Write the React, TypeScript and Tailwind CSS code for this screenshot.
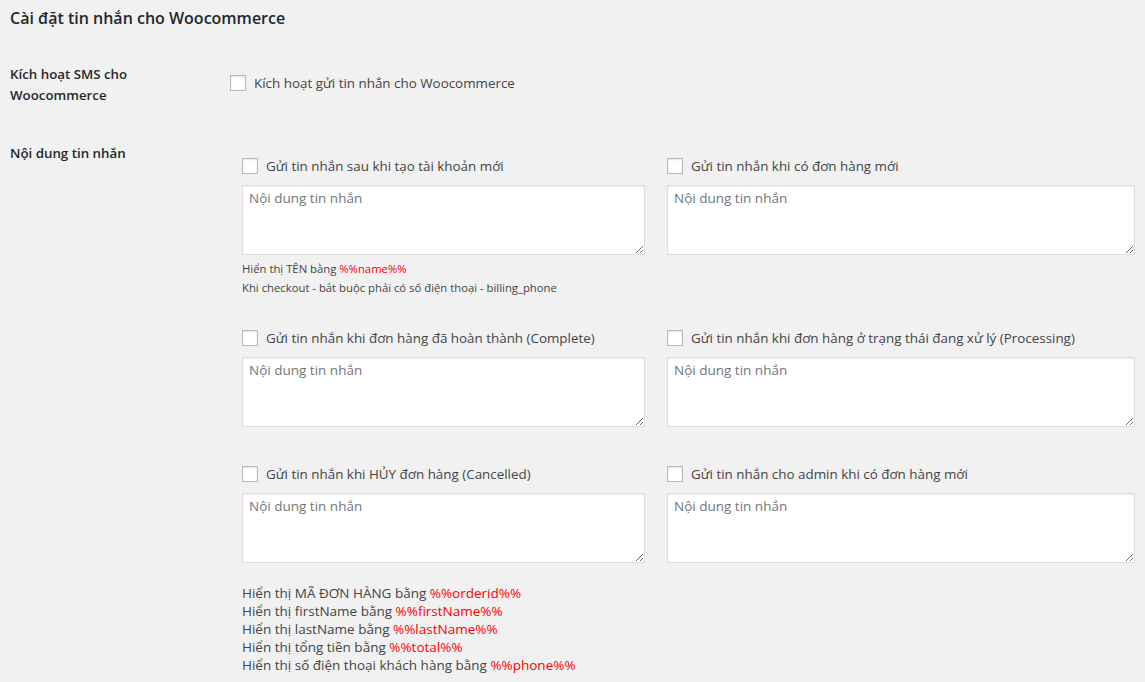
import React from 'react';

const font = { fontFamily: '"Open Sans", "Noto Sans", sans-serif' };

function Box() {
  return (
    <span className="inline-block w-4 h-4 shrink-0 border border-[#b4b9be] bg-white shadow-[inset_0_1px_2px_rgba(0,0,0,0.1)]" />
  );
}

function Field({ label, width }: { label: string; width: string }) {
  return (
    <div className={width}>
      <label className="flex items-center gap-2 h-4 text-[13.4px] text-[#444]">
        <Box />
        <span>{label}</span>
      </label>
      <textarea
        placeholder="Nội dung tin nhắn"
        className="mt-[11px] block w-full h-[70px] border border-[#ddd] bg-white px-[6px] pt-[2px] pb-[4px] text-[13.5px] text-[#32373c] placeholder:text-[#72777c] shadow-[inset_0_1px_2px_rgba(0,0,0,0.07)] outline-none"
      />
    </div>
  );
}

const vars: [string, string][] = [
  ['Hiển thị MÃ ĐƠN HÀNG bằng ', '%%orderid%%'],
  ['Hiển thị firstName bằng ', '%%firstName%%'],
  ['Hiển thị lastName bằng ', '%%lastName%%'],
  ['Hiển thị tổng tiền bằng ', '%%total%%'],
  ['Hiển thị số điện thoại khách hàng bằng ', '%%phone%%'],
];

export default function App() {
  return (
    <div className="min-h-screen bg-[#f1f1f1] text-[#23282d] pl-[10px]" style={font}>
      <h2 className="pt-[7px] text-[16px] font-semibold leading-[22px]">Cài đặt tin nhắn cho Woocommerce</h2>

      {/* Kích hoạt */}
      <div className="flex mt-[35px]">
        <div className="w-[220px] text-[13.3px] font-semibold leading-[21px]">
          Kích hoạt SMS cho
          <br />
          Woocommerce
        </div>
        <label className="flex items-center gap-2 h-4 mt-[11px] text-[13.4px] text-[#444]">
          <Box />
          <span>Kích hoạt gửi tin nhắn cho Woocommerce</span>
        </label>
      </div>

      {/* Nội dung */}
      <div className="flex mt-[36px]">
        <div className="w-[232px] text-[13.3px] font-semibold leading-[21px] pt-[1px]">Nội dung tin nhắn</div>
        <div className="pt-[16px]">
          <div className="flex gap-[22px]">
            <div className="w-[403px]">
              <Field label="Gửi tin nhắn sau khi tạo tài khoản mới" width="w-full" />
              <div className="mt-[4px] text-[11.3px] leading-[19px] text-[#444]">
                <div>
                  Hiển thị TÊN bằng <span className="text-[#ff0000]">%%name%%</span>
                </div>
                <div>Khi checkout - bắt buộc phải có số điện thoại - billing_phone</div>
              </div>
            </div>
            <Field label="Gửi tin nhắn khi có đơn hàng mới" width="w-[468px]" />
          </div>

          <div className="flex gap-[22px] mt-[33px]">
            <Field label="Gửi tin nhắn khi đơn hàng đã hoàn thành (Complete)" width="w-[403px]" />
            <Field label="Gửi tin nhắn khi đơn hàng ở trạng thái đang xử lý (Processing)" width="w-[468px]" />
          </div>

          <div className="flex gap-[22px] mt-[39px]">
            <Field label="Gửi tin nhắn khi HỦY đơn hàng (Cancelled)" width="w-[403px]" />
            <Field label="Gửi tin nhắn cho admin khi có đơn hàng mới" width="w-[468px]" />
          </div>

          <div className="mt-[21px] text-[13.5px] leading-[18px] text-[#444] pb-2">
            {vars.map(([t, v]) => (
              <div key={v}>
                {t}
                <span className="text-[#ff0000]">{v}</span>
              </div>
            ))}
          </div>
        </div>
      </div>
    </div>
  );
}
